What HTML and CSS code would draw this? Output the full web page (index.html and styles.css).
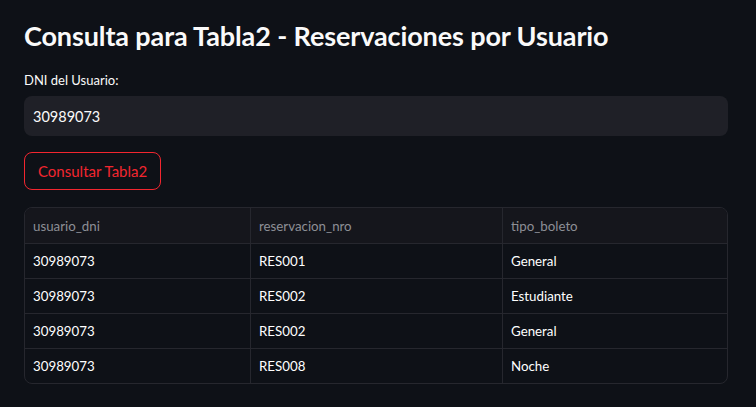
FILE: index.html
```html
<!DOCTYPE html>
<html lang="es">
<head>
<meta charset="utf-8">
<title>Consulta para Tabla2</title>
<link rel="stylesheet" href="styles.css">
</head>
<body>
<main class="page">
  <h1 class="title">Consulta para Tabla2 - Reservaciones por Usuario</h1>
  <label class="label" for="dni">DNI del Usuario:</label>
  <div class="input-box"><input id="dni" class="input" type="text" value="30989073"></div>
  <button class="btn" type="button">Consultar Tabla2</button>
  <div class="table">
    <div class="row head">
      <div class="cell">usuario_dni</div>
      <div class="cell">reservacion_nro</div>
      <div class="cell">tipo_boleto</div>
    </div>
    <div class="row">
      <div class="cell">30989073</div>
      <div class="cell">RES001</div>
      <div class="cell">General</div>
    </div>
    <div class="row">
      <div class="cell">30989073</div>
      <div class="cell">RES002</div>
      <div class="cell">Estudiante</div>
    </div>
    <div class="row">
      <div class="cell">30989073</div>
      <div class="cell">RES002</div>
      <div class="cell">General</div>
    </div>
    <div class="row">
      <div class="cell">30989073</div>
      <div class="cell">RES008</div>
      <div class="cell">Noche</div>
    </div>
  </div>
</main>
</body>
</html>
```
FILE: styles.css
```css
html, body {
  margin: 0;
  padding: 0;
  background: #0e1117;
}
body {
  font-family: Lato, "Noto Sans", sans-serif;
  color: #fafafa;
}
.page {
  width: 704px;
  padding: 18px 0 0 24px;
  display: flex;
  flex-direction: column;
  align-items: flex-start;
}
.title {
  margin: 0;
  font-size: 27px;
  font-weight: 700;
  line-height: 36px;
  letter-spacing: -0.12px;
  color: #fafafa;
}
.label {
  margin-top: 16px;
  font-size: 13px;
  line-height: 20px;
  color: #fafafa;
}
.input-box {
  margin-top: 6px;
  width: 704px;
  height: 40px;
  background: #1f2027;
  border-radius: 8px;
  display: flex;
  align-items: center;
}
.input {
  border: 0;
  outline: 0;
  background: transparent;
  color: #fafafa;
  font-family: inherit;
  font-size: 14.5px;
  padding: 0 0 0 9px;
  width: 100%;
}
.btn {
  margin-top: 16px;
  height: 38px;
  padding: 0 13px;
  background: transparent;
  border: 1px solid #f2262f;
  border-radius: 8px;
  color: #f2262f;
  font-family: inherit;
  font-size: 15px;
}
.table {
  margin-top: 17px;
  width: 702px;
  border: 1px solid #26272e;
  border-radius: 8px;
  overflow: hidden;
}
.row {
  display: grid;
  grid-template-columns: 225px 252px 1fr;
  height: 34px;
  border-top: 1px solid #26272e;
  font-size: 13.3px;
  color: #ffffff;
}
.row.head {
  border-top: 0;
  height: 35px;
  background: #15161c;
  color: #8d8f96;
}
.cell {
  display: flex;
  align-items: center;
  padding-left: 8px;
  border-left: 1px solid #26272e;
}
.cell:first-child {
  border-left: 0;
}
```
